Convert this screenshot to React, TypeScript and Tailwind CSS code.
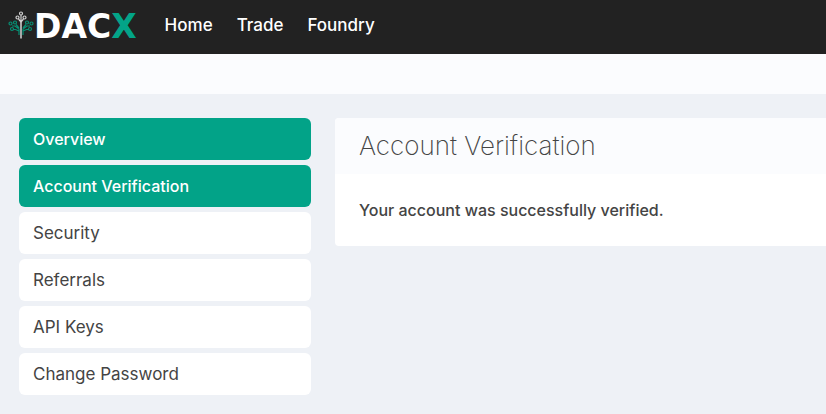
const navLinks = ["Home", "Trade", "Foundry"];

const menuItems = [
  { label: "Overview", active: true },
  { label: "Account Verification", active: true },
  { label: "Security", active: false },
  { label: "Referrals", active: false },
  { label: "API Keys", active: false },
  { label: "Change Password", active: false },
];

function TreeMark() {
  return (
    <svg viewBox="0 0 26 28" className="mb-1 h-7 w-[26px]" fill="none" aria-hidden="true">
      <g stroke="#078f74" strokeWidth="1.2">
        <path d="M11 24V18L7 15H4M11 17 8 13.500M11 20 7.500 18.500H5M15 24V18l4-3h3M15 17l3-3.500M15 20l3.500-1.500H21" />
        <circle cx="2.500" cy="12.500" r="1.500" />
        <circle cx="7" cy="11.500" r="1.500" />
        <circle cx="4" cy="18" r="1.500" />
        <circle cx="23.500" cy="12.500" r="1.500" />
        <circle cx="19" cy="11.500" r="1.500" />
        <circle cx="22" cy="18" r="1.500" />
      </g>
      <path d="M13 10v17.500" stroke="#a8a8a8" strokeWidth="2" />
      <g stroke="#d0d0d0" strokeWidth="1.2">
        <path d="M13 4v7M13 11 10.500 8M13 11l2.500-3" />
        <circle cx="13" cy="2.500" r="1.500" />
        <circle cx="9.500" cy="6.500" r="1.500" />
        <circle cx="16.500" cy="6.500" r="1.500" />
      </g>
    </svg>
  );
}

export default function App() {
  return (
    <div className="min-h-screen bg-[#eef1f6] font-['Inter',sans-serif] text-base leading-6 text-[#444]">
      <header className="flex h-[54px] items-center gap-7 bg-[#222] px-2 text-white">
        <a href="#home" aria-label="DACX" className="flex items-center">
          <TreeMark />
          <span className="font-['DejaVu_Sans',sans-serif] text-[33px] leading-8 font-bold">
            DAC<span className="text-[#03a488]">X</span>
          </span>
        </a>
        <nav className="flex gap-6 pb-1 text-[17px] font-medium">
          {navLinks.map((label) => (
            <a key={label} href={"#" + label.toLowerCase()}>{label}</a>
          ))}
        </nav>
      </header>
      <div className="h-10 bg-[#fbfcfe]" />
      <div className="flex items-start gap-6 py-6 pl-[19px]">
        <nav className="flex w-[292px] shrink-0 flex-col gap-[5px]">
          {menuItems.map(({ label, active }) => (
            <a
              key={label}
              href={"#" + label.toLowerCase().replace(" ", "-")}
              className={
                active
                  ? "rounded-md bg-[#02a388] px-3.5 py-[9px] font-medium text-white"
                  : "rounded-md bg-white px-3.5 py-[9px] text-[17px] leading-6"
              }
            >
              {label}
            </a>
          ))}
        </nav>
        <main className="min-w-0 flex-1 overflow-hidden rounded-l-sm bg-white">
          <h1 className="bg-[#fbfcfe] px-6 py-3 text-[26px] leading-8 font-extralight">
            Account Verification
          </h1>
          <p className="p-6 font-medium">Your account was successfully verified.</p>
        </main>
      </div>
    </div>
  );
}
